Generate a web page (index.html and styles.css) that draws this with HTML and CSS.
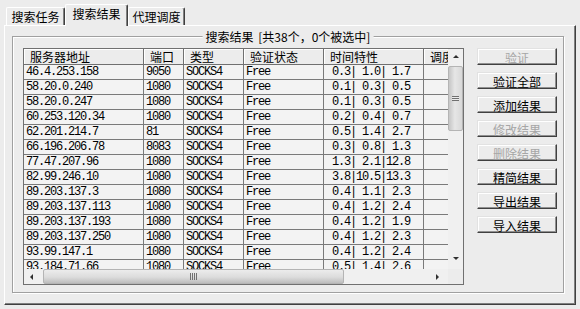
FILE: index.html
```html
<!DOCTYPE html>
<html lang="zh-CN">
<head>
<meta charset="utf-8">
<title>搜索结果</title>
<link rel="stylesheet" href="styles.css">
</head>
<body>
<div class="tabstrip">
  <div class="tab tab1">搜索任务</div>
  <div class="tab tab2 active">搜索结果</div>
  <div class="tab tab3">代理调度</div>
</div>
<div class="panel">
  <div class="group">
    <div class="legend">搜索结果 [共38个，0个被选中]</div>
    <div class="list">
      <div class="list-main">
        <div class="grid">
          <div class="row head"><div class="c">服务器地址</div><div class="c">端口</div><div class="c">类型</div><div class="c">验证状态</div><div class="c">时间特性</div><div class="c">调度</div></div>
          <div class="row"><div class="c">46.4.253.158</div><div class="c">9050</div><div class="c">SOCKS4</div><div class="c">Free</div><div class="c"> 0.3| 1.0| 1.7</div><div class="c"></div></div>
          <div class="row"><div class="c">58.20.0.240</div><div class="c">1080</div><div class="c">SOCKS4</div><div class="c">Free</div><div class="c"> 0.1| 0.3| 0.5</div><div class="c"></div></div>
          <div class="row"><div class="c">58.20.0.247</div><div class="c">1080</div><div class="c">SOCKS4</div><div class="c">Free</div><div class="c"> 0.1| 0.3| 0.5</div><div class="c"></div></div>
          <div class="row"><div class="c">60.253.120.34</div><div class="c">1080</div><div class="c">SOCKS4</div><div class="c">Free</div><div class="c"> 0.2| 0.4| 0.7</div><div class="c"></div></div>
          <div class="row"><div class="c">62.201.214.7</div><div class="c">81</div><div class="c">SOCKS4</div><div class="c">Free</div><div class="c"> 0.5| 1.4| 2.7</div><div class="c"></div></div>
          <div class="row"><div class="c">66.196.206.78</div><div class="c">8083</div><div class="c">SOCKS4</div><div class="c">Free</div><div class="c"> 0.3| 0.8| 1.3</div><div class="c"></div></div>
          <div class="row"><div class="c">77.47.207.96</div><div class="c">1080</div><div class="c">SOCKS4</div><div class="c">Free</div><div class="c"> 1.3| 2.1|12.8</div><div class="c"></div></div>
          <div class="row"><div class="c">82.99.246.10</div><div class="c">1080</div><div class="c">SOCKS4</div><div class="c">Free</div><div class="c"> 3.8|10.5|13.3</div><div class="c"></div></div>
          <div class="row"><div class="c">89.203.137.3</div><div class="c">1080</div><div class="c">SOCKS4</div><div class="c">Free</div><div class="c"> 0.4| 1.1| 2.3</div><div class="c"></div></div>
          <div class="row"><div class="c">89.203.137.113</div><div class="c">1080</div><div class="c">SOCKS4</div><div class="c">Free</div><div class="c"> 0.4| 1.2| 2.4</div><div class="c"></div></div>
          <div class="row"><div class="c">89.203.137.193</div><div class="c">1080</div><div class="c">SOCKS4</div><div class="c">Free</div><div class="c"> 0.4| 1.2| 1.9</div><div class="c"></div></div>
          <div class="row"><div class="c">89.203.137.250</div><div class="c">1080</div><div class="c">SOCKS4</div><div class="c">Free</div><div class="c"> 0.4| 1.2| 2.3</div><div class="c"></div></div>
          <div class="row"><div class="c">93.99.147.1</div><div class="c">1080</div><div class="c">SOCKS4</div><div class="c">Free</div><div class="c"> 0.4| 1.2| 2.4</div><div class="c"></div></div>
          <div class="row"><div class="c">93.184.71.66</div><div class="c">1080</div><div class="c">SOCKS4</div><div class="c">Free</div><div class="c"> 0.5| 1.4| 2.6</div><div class="c"></div></div>
        </div>
        <div class="vscroll">
          <div class="sbtn"><span class="tri up"></span></div>
          <div class="vtrack"><div class="vthumb"><span class="grip-h"></span></div></div>
          <div class="sbtn"><span class="tri down"></span></div>
        </div>
      </div>
      <div class="list-bottom">
        <div class="hscroll">
          <div class="sbtn"><span class="tri left"></span></div>
          <div class="htrack"><div class="hthumb"><span class="grip-v"></span></div></div>
          <div class="sbtn"><span class="tri right"></span></div>
        </div>
        <div class="corner"></div>
      </div>
    </div>
    <div class="buttons">
      <div class="btn dis">验证</div>
      <div class="btn">验证全部</div>
      <div class="btn">添加结果</div>
      <div class="btn dis">修改结果</div>
      <div class="btn dis">删除结果</div>
      <div class="btn">精简结果</div>
      <div class="btn">导出结果</div>
      <div class="btn">导入结果</div>
    </div>
  </div>
</div>
</body>
</html>
```

FILE: styles.css
```css
html, body {
  margin: 0;
  padding: 0;
}
body {
  width: 580px;
  height: 309px;
  overflow: hidden;
  background: #ececec;
  color: #000;
  font-family: "Noto Sans CJK SC", sans-serif;
  font-size: 12px;
  line-height: 12px;
}

/* tabs */
.tabstrip {
  display: flex;
  align-items: flex-end;
  height: 25px;
  padding-left: 6px;
}
.tab {
  box-sizing: border-box;
  height: 18px;
  padding-top: 3px;
  border-top: 1px solid #fff;
  border-left: 1px solid #fff;
  border-right: 1px solid #404040;
  border-radius: 2px 2px 0 0;
  box-shadow: inset -1px 0 #808080;
  text-align: center;
  line-height: 12px;
  background: #ececec;
}
.tab1 { width: 59px; }
.tab2 {
  width: 63px;
  height: 22px;
  margin-bottom: -1px;
  position: relative;
  z-index: 1;
}
.tab3 { width: 57px; }

/* tab panel */
.panel {
  box-sizing: border-box;
  width: 572px;
  height: 280px;
  margin-left: 4px;
  border: 1px solid;
  border-color: #fff #404040 #404040 #fff;
  box-shadow: inset -1px -1px #808080;
  padding: 10px 10px 10px 7px;
  display: flex;
}

/* group box */
.group {
  box-sizing: border-box;
  width: 552px;
  height: 257px;
  position: relative;
  display: flex;
  gap: 13px;
  padding: 11px 6px 7px 10px;
  border: 1px solid #a0a0a0;
  box-shadow: inset 1px 1px #fff, 1px 1px #fff;
}
.legend {
  position: absolute;
  top: -6px;
  left: 50%;
  transform: translateX(-50%);
  padding: 0 3px;
  background: #ececec;
  white-space: nowrap;
  line-height: 12px;
  word-spacing: 2px;
}

/* list view */
.list {
  box-sizing: border-box;
  width: 441px;
  height: 237px;
  border: 1px solid #707070;
  background: #f3f3f3;
  display: flex;
  flex-direction: column;
}
.list-main {
  display: flex;
  height: 220px;
}
.grid {
  width: 424px;
  overflow: hidden;
}
.row {
  display: grid;
  grid-template-columns: 120px 40px 60px 80px 100px 60px;
  width: 460px;
  height: 15px;
}
.c {
  box-sizing: border-box;
  border-right: 1px solid #7a7a7a;
  border-bottom: 1px solid #7a7a7a;
  padding: 1px 0 0 2px;
  font-family: "Liberation Mono", monospace;
  font-size: 12px;
  line-height: 13px;
  letter-spacing: -1.2px;
  white-space: pre;
  overflow: hidden;
}
.head {
  height: 16px;
  background: #ececec;
}
.head .c {
  padding: 0 0 0 6px;
  font-family: "Noto Sans CJK SC", sans-serif;
  line-height: 15px;
  letter-spacing: 0;
  border-color: #707070;
  box-shadow: inset 1px 1px #fff;
}

/* scrollbars */
.vscroll {
  width: 15px;
  display: flex;
  flex-direction: column;
  padding-bottom: 3px;
  background: #f0f0f0;
}
.sbtn {
  flex: 0 0 15px;
  height: 15px;
  display: flex;
  align-items: center;
  justify-content: center;
}
.vtrack {
  flex: 1;
}
.vthumb {
  box-sizing: border-box;
  margin-top: 2px;
  height: 65px;
  border: 1px solid #b4b4b4;
  border-radius: 2px;
  background: linear-gradient(to right, #c6c6c6, #e6e6e6 45%, #d8d8d8);
  display: flex;
  align-items: center;
  justify-content: center;
}
.grip-h {
  width: 7px;
  height: 5px;
  border-top: 1px solid #707070;
  border-bottom: 1px solid #707070;
  box-sizing: border-box;
  background: linear-gradient(#ececec 1px, #707070 1px, #707070 2px, #ececec 2px);
  background-size: 100% 3px;
  background-position: 0 0;
}
.list-bottom {
  display: flex;
  height: 15px;
}
.hscroll {
  width: 424px;
  display: flex;
  padding-right: 3px;
  box-sizing: border-box;
  background: #f0f0f0;
}
.htrack {
  flex: 1;
}
.hthumb {
  box-sizing: border-box;
  margin-left: 4px;
  width: 301px;
  height: 15px;
  border: 1px solid #b4b4b4;
  border-radius: 2px;
  background: linear-gradient(to bottom, #ececec, #dcdcdc 55%, #bdbdbd);
  display: flex;
  align-items: center;
  justify-content: center;
}
.grip-v {
  width: 7px;
  height: 7px;
  background: linear-gradient(to right, #707070 1px, transparent 1px);
  background-size: 2px 100%;
}
.corner {
  width: 15px;
  background: #ececec;
}
.tri {
  width: 0;
  height: 0;
  border: 3px solid transparent;
}
.tri.up { border-bottom: 3px solid #303030; border-top-width: 0; }
.tri.down { border-top: 3px solid #303030; border-bottom-width: 0; }
.tri.left { border-right: 3px solid #303030; border-left-width: 0; }
.tri.right { border-left: 3px solid #303030; border-right-width: 0; }

/* buttons */
.buttons {
  width: 80px;
  display: flex;
  flex-direction: column;
  gap: 7px;
}
.btn {
  box-sizing: border-box;
  height: 17px;
  padding-top: 2px;
  border: 1px solid;
  border-color: #e2e2e2 #404040 #404040 #e2e2e2;
  box-shadow: inset -1px -1px #909090, inset 1px 1px #fff;
  background: #ececec;
  text-align: center;
  line-height: 13px;
  white-space: nowrap;
}
.btn.dis {
  color: #a6a6a6;
}
```
